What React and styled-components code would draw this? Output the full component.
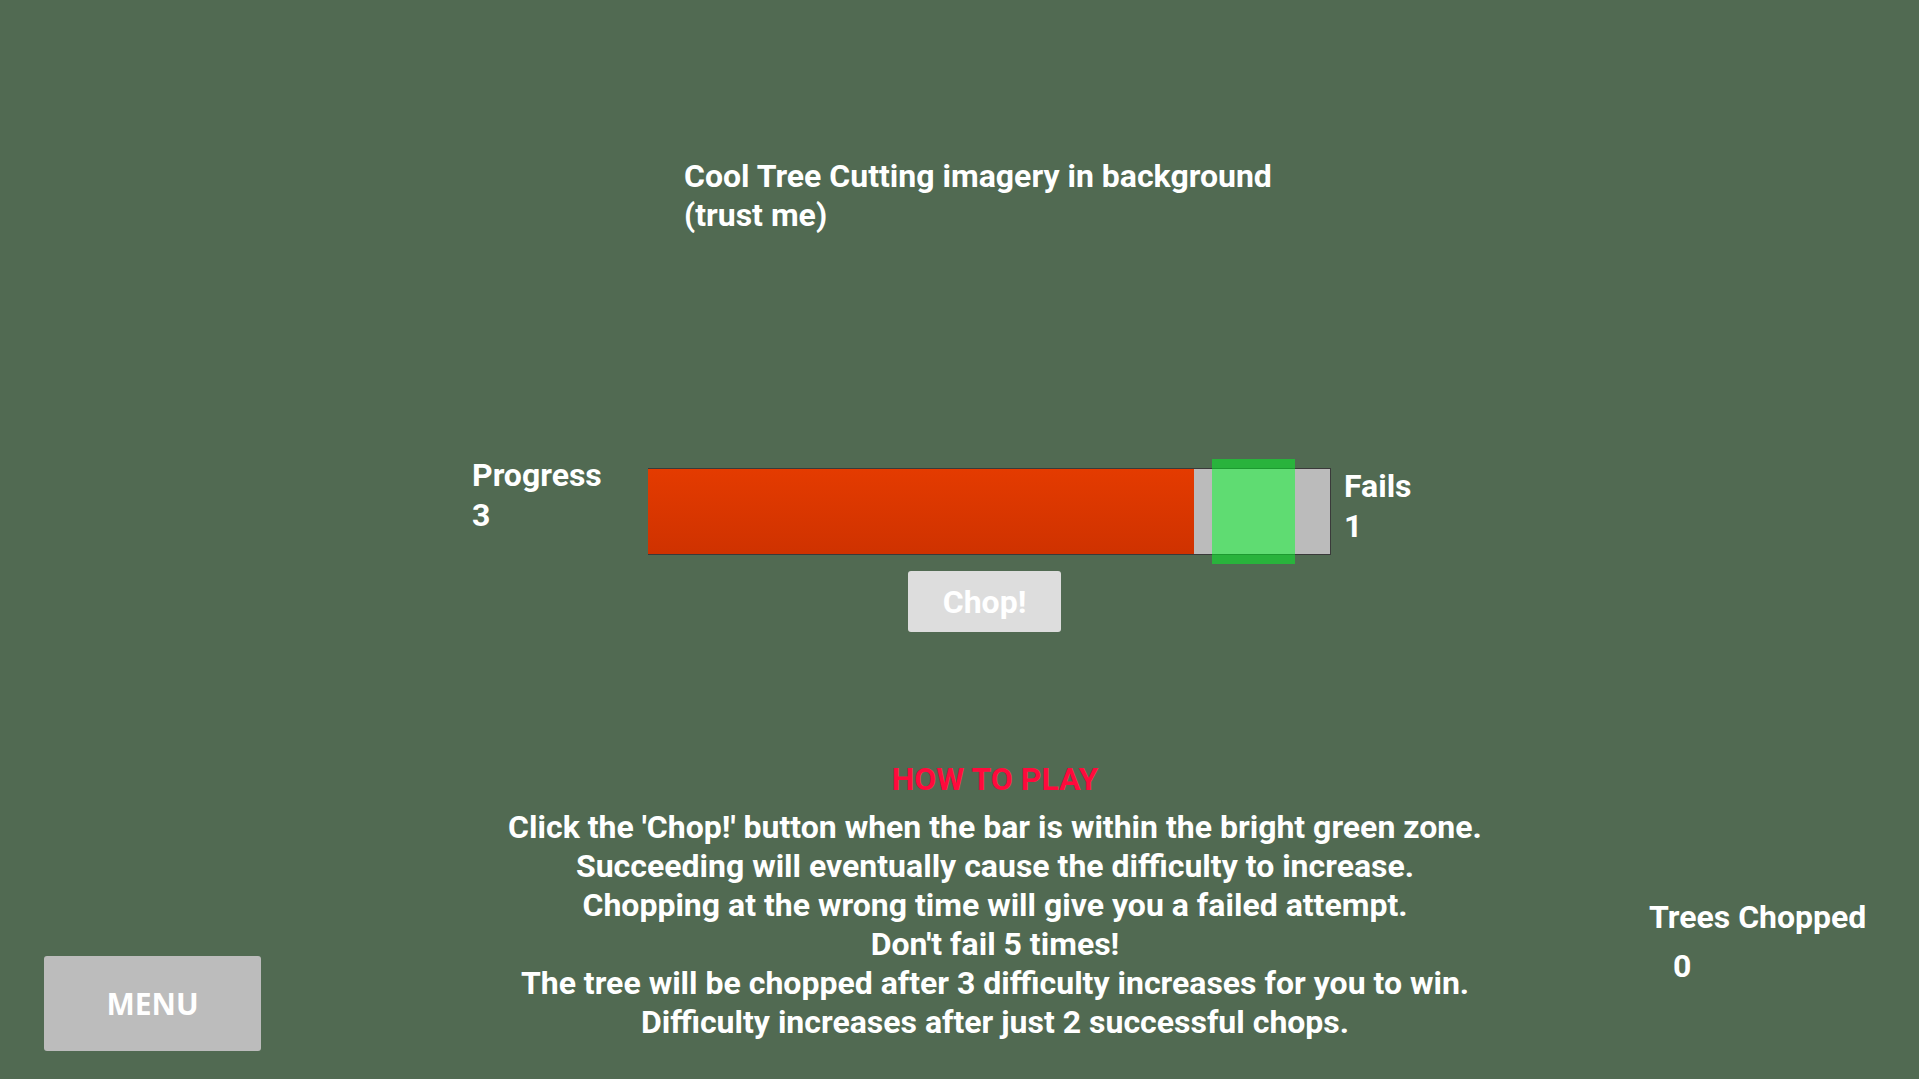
import React from 'react';
import styled, {createGlobalStyle} from 'styled-components';

const GlobalStyle = createGlobalStyle`
  html, body {
    margin: 0;
    padding: 0;
    background: #516a52;
  }
  body {
    font-family: Roboto, "Noto Sans", "Liberation Sans", sans-serif;
    color: #ffffff;
  }
`;

const progress = 3;
const fails = 1;
const treesChopped = 0;
const fillPercent = 80;

const instructions = [
    "Click the 'Chop!' button when the bar is within the bright green zone.",
    "Succeeding will eventually cause the difficulty to increase.",
    "Chopping at the wrong time will give you a failed attempt.",
    "Don't fail 5 times!",
    "The tree will be chopped after 3 difficulty increases for you to win.",
    "Difficulty increases after just 2 successful chops.",
];

export default () => {

    return (
        <Page>
            <GlobalStyle/>
            <Header>
                Cool Tree Cutting imagery in background
                <br/>
                (trust me)
            </Header>

            <GameRow>
                <Counter>
                    Progress
                    <br/>
                    {progress}
                </Counter>
                <TrackColumn>
                    <Track>
                        <Fill style={{width: `${fillPercent}%`}}/>
                        <Zone/>
                    </Track>
                    <ChopButton>Chop!</ChopButton>
                </TrackColumn>
                <Counter $side="right">
                    Fails
                    <br/>
                    {fails}
                </Counter>
            </GameRow>

            <Bottom>
                <MenuButton>MENU</MenuButton>
                <HowTo>
                    <HowToTitle>HOW TO PLAY</HowToTitle>
                    {instructions.map((line) => (
                        <div key={line}>{line}</div>
                    ))}
                </HowTo>
                <Score>
                    <div>Trees Chopped</div>
                    <ScoreValue>{treesChopped}</ScoreValue>
                </Score>
            </Bottom>
        </Page>
    )
};

const Page = styled.div`
  height: 100vh;
  display: flex;
  flex-direction: column;
  overflow: hidden;
  font-weight: 700;
  font-size: 32px;
`;

const Header = styled.div`
  padding: 157px 0 0 684px;
  line-height: 39px;
`;

const GameRow = styled.div`
  display: flex;
  align-items: flex-start;
  margin-top: 220px;
  padding-left: 472px;
`;

const Counter = styled.div`
  line-height: 40px;
  width: ${p => p.$side === 'right' ? 'auto' : '176px'};
  margin-top: ${p => p.$side === 'right' ? '11px' : '0'};
  margin-left: ${p => p.$side === 'right' ? '13px' : '0'};
`;

const TrackColumn = styled.div`
  display: flex;
  flex-direction: column;
  margin-top: 13px;
`;

const Track = styled.div`
  position: relative;
  width: 682px;
  height: 85px;
  background: #bbbbbb;
  border-top: 1px solid #3a3a3a;
  border-bottom: 1px solid #3a3a3a;
  border-right: 1px solid #3a3a3a;
  box-sizing: content-box;
  display: flex;
`;

const Fill = styled.div`
  height: 100%;
  background: linear-gradient(#e43b00, #cf3200);
`;

const Zone = styled.div`
  position: absolute;
  left: 564px;
  top: -10px;
  width: 83px;
  height: 105px;
  background: rgba(0, 255, 38, 0.49);
`;

const ChopButton = styled.button`
  margin: 16px 0 0 260px;
  width: 153px;
  height: 61px;
  border: none;
  border-radius: 3px;
  background: #dddddd;
  color: #ffffff;
  font-family: Roboto, "Noto Sans", sans-serif;
  font-weight: 700;
  font-size: 32px;
  padding: 0;
  cursor: pointer;
`;

const Bottom = styled.div`
  flex: 1;
  display: grid;
  grid-template-columns: 351px 1200px 1fr;
  padding: 128px 0 28px 44px;
`;

const MenuButton = styled.button`
  align-self: end;
  width: 217px;
  height: 95px;
  border: none;
  border-radius: 3px;
  background: #bcbcbc;
  color: #ffffff;
  font-family: "Open Sans", "Noto Sans", sans-serif;
  font-weight: 700;
  font-size: 30px;
  padding: 0;
  cursor: pointer;
`;

const HowTo = styled.div`
  text-align: center;
  line-height: 39px;
`;

const HowToTitle = styled.div`
  color: #ff0a3c;
  margin-bottom: 9px;
`;

const Score = styled.div`
  padding: 138px 0 0 54px;
  line-height: 39px;
`;

const ScoreValue = styled.div`
  margin: 10px 0 0 24px;
`;
